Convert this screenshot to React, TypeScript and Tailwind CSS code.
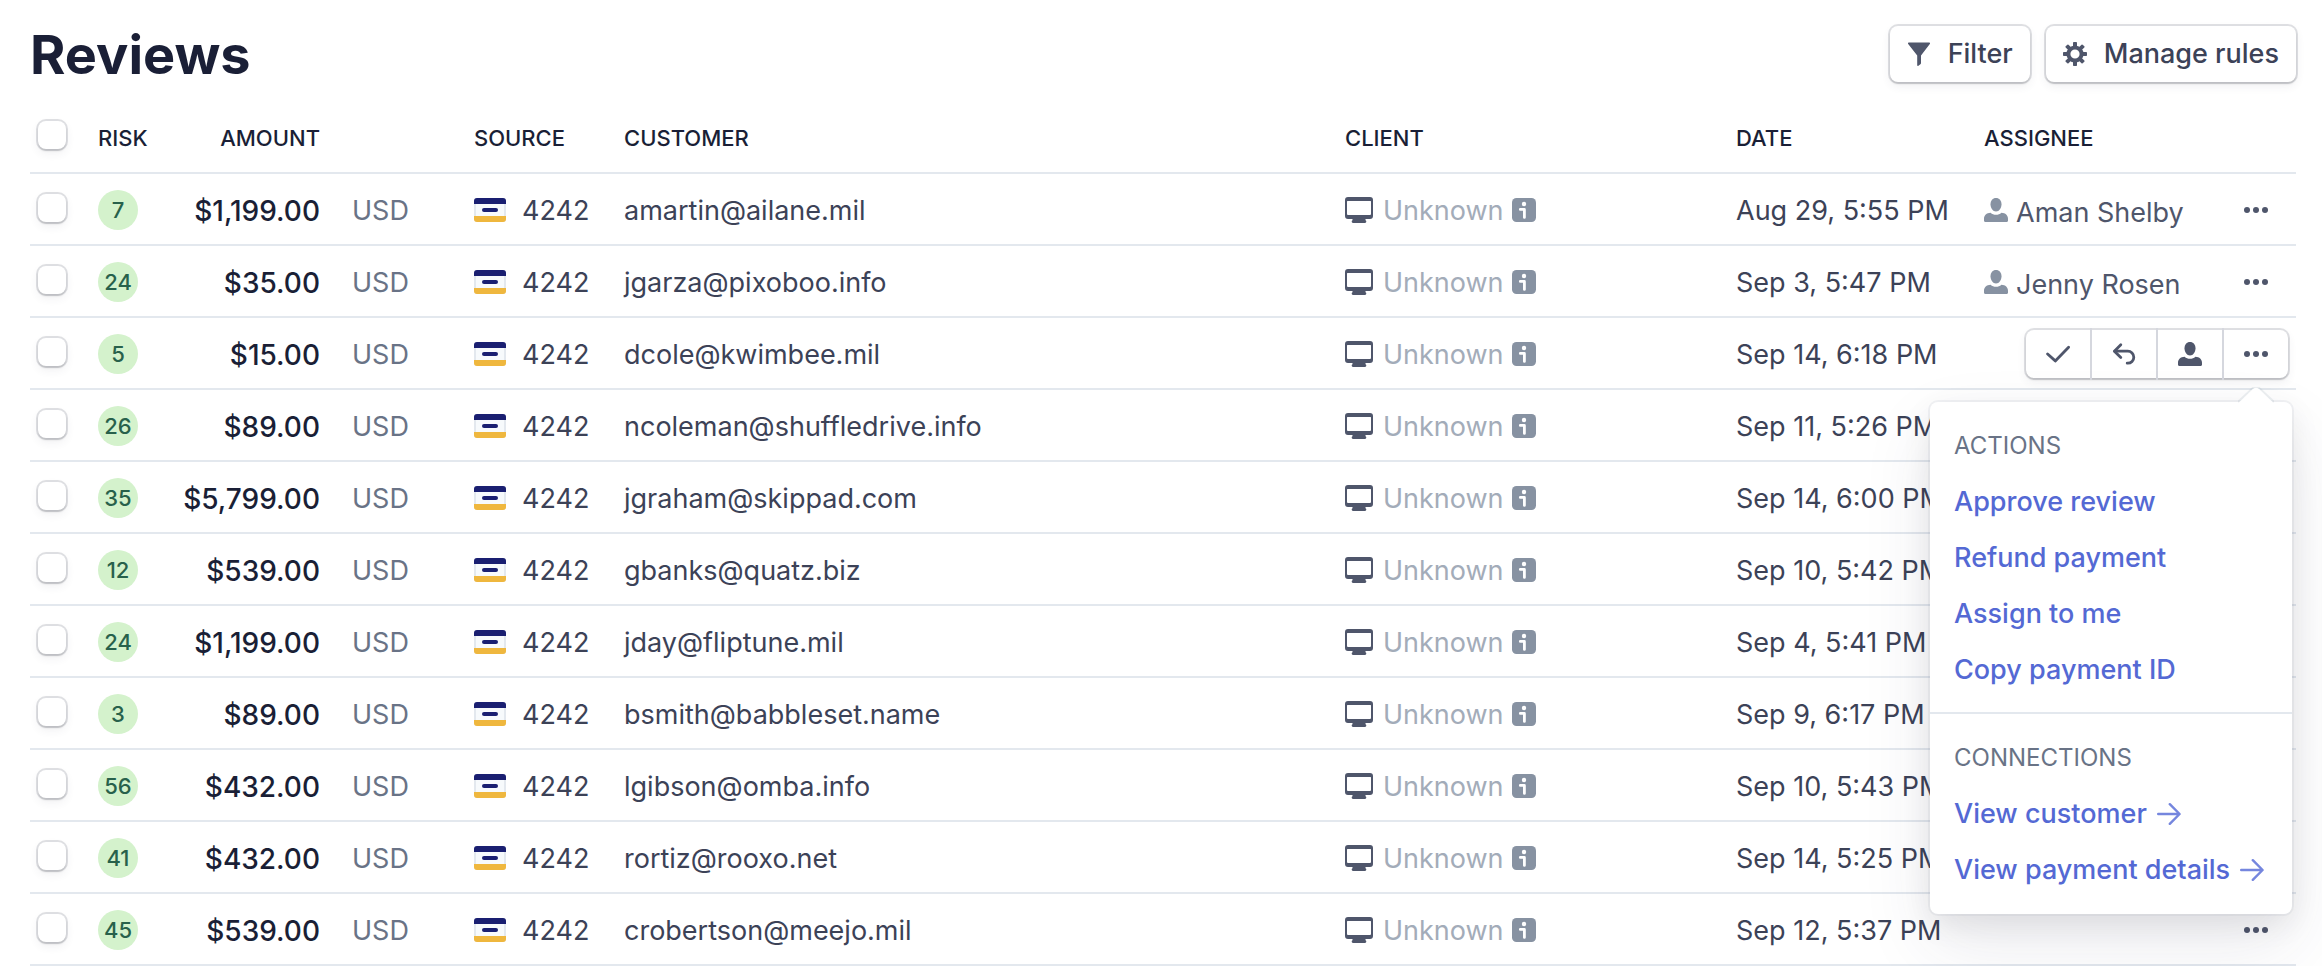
import React from "react";

type Review = {
  risk: number;
  amount: string;
  customer: string;
  date: string;
  assignee?: string;
  active?: boolean;
};

const reviews: Review[] = [
  { risk: 7, amount: "$1,199.00", customer: "amartin@ailane.mil", date: "Aug 29, 5:55 PM", assignee: "Aman Shelby" },
  { risk: 24, amount: "$35.00", customer: "jgarza@pixoboo.info", date: "Sep 3, 5:47 PM", assignee: "Jenny Rosen" },
  { risk: 5, amount: "$15.00", customer: "dcole@kwimbee.mil", date: "Sep 14, 6:18 PM", active: true },
  { risk: 26, amount: "$89.00", customer: "ncoleman@shuffledrive.info", date: "Sep 11, 5:26 PM" },
  { risk: 35, amount: "$5,799.00", customer: "jgraham@skippad.com", date: "Sep 14, 6:00 PM" },
  { risk: 12, amount: "$539.00", customer: "gbanks@quatz.biz", date: "Sep 10, 5:42 PM" },
  { risk: 24, amount: "$1,199.00", customer: "jday@fliptune.mil", date: "Sep 4, 5:41 PM" },
  { risk: 3, amount: "$89.00", customer: "bsmith@babbleset.name", date: "Sep 9, 6:17 PM" },
  { risk: 56, amount: "$432.00", customer: "lgibson@omba.info", date: "Sep 10, 5:43 PM" },
  { risk: 41, amount: "$432.00", customer: "rortiz@rooxo.net", date: "Sep 14, 5:25 PM" },
  { risk: 45, amount: "$539.00", customer: "crobertson@meejo.mil", date: "Sep 12, 5:37 PM" },
];

const icon = "block size-6 shrink-0";

function FilterIcon() {
  return (
    <svg viewBox="0 0 24 24" className={`${icon} text-[#4f566b]`} fill="currentColor" aria-hidden="true">
      <path d="M2 0.500h20c.900 0 1.300.900.800 1.600L14 13.400V21c0 .500-.200.900-.600 1.200l-2 1.600c-.600.400-1.200.100-1.200-.600v-9.800L1.200 2.100C.700 1.400 1.100.500 2 .500z" />
    </svg>
  );
}

function GearIcon() {
  return (
    <svg viewBox="0 0 24 24" className={`${icon} text-[#4f566b]`} aria-hidden="true">
      <g fill="currentColor">
        {[0, 45, 90, 135, 180, 225, 270, 315].map((angle) => (
          <rect key={angle} x="10" y="0" width="4" height="6" rx="0.800" transform={`rotate(${angle} 12 12)`} />
        ))}
      </g>
      <circle cx="12" cy="12" r="6.600" fill="none" stroke="currentColor" strokeWidth="4" />
    </svg>
  );
}

function PersonIcon() {
  return (
    <svg viewBox="0 0 24 24" className={icon} fill="currentColor" aria-hidden="true">
      <path d="M12 0c3.300 0 5.500 2.500 5.500 6.300 0 4-2.400 7.200-5.500 7.200S6.500 10.300 6.500 6.300C6.500 2.500 8.700 0 12 0z" />
      <path d="M6.600 14.700c1.500 1.400 3.300 2.100 5.400 2.100s3.900-.700 5.400-2.100c4.100.300 6.600 2.500 6.600 6v2.100c0 .700-.500 1.200-1.200 1.200H1.200C.5 24 0 23.500 0 22.800v-2.100c0-3.500 2.500-5.700 6.600-6z" />
    </svg>
  );
}

function DotsIcon() {
  return (
    <svg viewBox="0 0 24 24" className={icon} fill="currentColor" aria-hidden="true">
      <circle cx="3" cy="12" r="3" />
      <circle cx="12" cy="12" r="3" />
      <circle cx="21" cy="12" r="3" />
    </svg>
  );
}

function CheckIcon() {
  return (
    <svg viewBox="0 0 24 24" className={icon} fill="none" stroke="currentColor" strokeWidth="2.800" strokeLinecap="round" strokeLinejoin="round" aria-hidden="true">
      <path d="M1.600 12 9.300 18.900 22.600 5.200" />
    </svg>
  );
}

function UndoIcon() {
  return (
    <svg viewBox="0 0 24 24" className={icon} fill="none" stroke="currentColor" strokeWidth="2.800" strokeLinecap="round" strokeLinejoin="round" aria-hidden="true">
      <path d="M8.800 2.800 2.400 9.200l6.400 6.400" />
      <path d="M2.800 9.200h13a6 6 0 0 1 0 12h-.6" />
    </svg>
  );
}

function MonitorIcon() {
  return (
    <svg viewBox="0 0 28 26" className="block h-[26px] w-7 shrink-0" aria-hidden="true">
      <path fillRule="evenodd" fill="currentColor" d="M3 0h22a3 3 0 0 1 3 3v16a3 3 0 0 1-3 3h-4.500v1.200c.6.400.8.800.8 1.400 0 .8-.5 1.400-1.300 1.400H8c-.8 0-1.300-.6-1.300-1.400 0-.6.200-1 .8-1.400V22H3a3 3 0 0 1-3-3V3a3 3 0 0 1 3-3zM2 4.500V17a1 1 0 0 0 1 1h22a1 1 0 0 0 1-1V4.500a.5.500 0 0 0-.5-.5h-23a.5.500 0 0 0-.5.500z" />
    </svg>
  );
}

function InfoIcon() {
  return (
    <svg viewBox="0 0 24 24" className={`${icon} text-[#8792a2]`} aria-hidden="true">
      <rect width="24" height="24" rx="4.500" fill="currentColor" />
      <circle cx="12" cy="6" r="2.200" fill="#fff" />
      <path d="M8.300 11.400h4.100v8" fill="none" stroke="#fff" strokeWidth="2.800" strokeLinecap="round" strokeLinejoin="round" />
    </svg>
  );
}

function CardIcon() {
  return (
    <svg viewBox="0 0 32 24" className="block h-6 w-8 shrink-0" aria-hidden="true">
      <rect x="0" y="0" width="32" height="24" rx="3" fill="#e3e8ee" />
      <rect x="2" y="6" width="28" height="12" fill="#f7fafc" />
      <path d="M3 0h26a3 3 0 0 1 3 3v3H0V3a3 3 0 0 1 3-3z" fill="#1a1f71" />
      <path d="M0 18h32v3a3 3 0 0 1-3 3H3a3 3 0 0 1-3-3z" fill="#efb73e" />
      <rect x="8" y="10" width="16" height="4" rx="2" fill="#1a1f71" />
    </svg>
  );
}

function ArrowIcon() {
  return (
    <svg viewBox="0 0 24 24" className={`${icon} text-[#7586de]`} fill="none" stroke="currentColor" strokeWidth="2.400" strokeLinecap="round" strokeLinejoin="round" aria-hidden="true">
      <path d="M1.200 12h21M12.800 2.200 22.600 12l-9.800 9.800" />
    </svg>
  );
}

function Tick({ label }: { label: string }) {
  return (
    <input
      type="checkbox"
      aria-label={label}
      className="ml-2 block size-7 appearance-none rounded-lg bg-white shadow-[0_0_0_2px_rgba(60,66,87,0.16),0_2px_2px_rgba(0,0,0,0.12),0_4px_10px_rgba(60,66,87,0.08)] checked:bg-[#5469d4]"
    />
  );
}

function ToolbarButton({ children }: { children: React.ReactNode }) {
  return (
    <button
      type="button"
      className="flex h-14 items-center gap-[17px] rounded-lg bg-white px-[17px] text-[27px] font-medium text-[#3c4257] shadow-[0_0_0_2px_rgba(60,66,87,0.16),0_2px_2px_rgba(0,0,0,0.12),0_4px_10px_rgba(60,66,87,0.08)]"
    >
      {children}
    </button>
  );
}

function ActionsMenu() {
  const item = "flex h-14 items-center gap-2.5 px-6 text-[27px] font-medium whitespace-nowrap text-[#5469d4]";
  const heading = "flex h-14 items-center px-6 text-[24px] font-normal text-[#697386]";
  return (
    <div className="absolute top-full -right-1 z-10 mt-6 min-w-[362px] rounded-lg bg-white text-left shadow-[0_0_0_2px_rgba(136,152,170,0.1),0_30px_70px_rgba(49,49,93,0.1),0_10px_30px_rgba(0,0,0,0.08)]">
      <svg viewBox="0 0 36 16" className="absolute -top-[15px] right-[18px] h-4 w-9" aria-hidden="true">
        <path d="M0 16 14 2.600c2.500-2.400 5.500-2.400 8 0L36 16z" fill="#fff" />
        <path d="M0 15 14 1.600c2.500-2.400 5.500-2.400 8 0L36 15" fill="none" stroke="#8898aa" strokeOpacity="0.150" strokeWidth="2" />
      </svg>
      <section className="border-b-2 border-[#e3e8ee] pt-4 pb-3.5">
        <h2 className={heading}>ACTIONS</h2>
        <button type="button" className={item}>Approve review</button>
        <button type="button" className={item}>Refund payment</button>
        <button type="button" className={item}>Assign to me</button>
        <button type="button" className={item}>Copy payment ID</button>
      </section>
      <section className="py-4">
        <h2 className={heading}>CONNECTIONS</h2>
        <a href="#customer" className={item}>View customer <ArrowIcon /></a>
        <a href="#payment" className={item}>View payment details <ArrowIcon /></a>
      </section>
    </div>
  );
}

function RowActions() {
  const cell = "flex h-12 w-16 items-center justify-center";
  const divider = "-my-0.5 w-0.5 bg-[#d5d7de]";
  return (
    <div className="relative ml-auto flex w-fit rounded-lg bg-white text-[#4f566b] shadow-[0_0_0_2px_rgba(60,66,87,0.16),0_2px_2px_rgba(0,0,0,0.12),0_4px_10px_rgba(60,66,87,0.08)]">
      <button type="button" aria-label="Approve" className={cell}><CheckIcon /></button>
      <span className={divider} />
      <button type="button" aria-label="Refund" className={cell}><UndoIcon /></button>
      <span className={divider} />
      <button type="button" aria-label="Assign" className={cell}><PersonIcon /></button>
      <span className={divider} />
      <button type="button" aria-label="More actions" className={cell}><DotsIcon /></button>
      <ActionsMenu />
    </div>
  );
}

export default function App() {
  const th = "h-[73px] p-0 pt-1 text-left align-middle text-[22px] font-medium text-[#1a1f36]";
  const iconCell = "h-[72px] p-0 pt-0.5 align-middle whitespace-nowrap";
  const textCell = "h-[72px] p-0 pt-1 align-middle whitespace-nowrap";
  return (
    <main className="bg-white pr-[26px] pl-[30px] font-['Inter',sans-serif] text-[27px] leading-9 text-[#3c4257]">
      <header className="flex h-[100px] items-center justify-between pt-2">
        <h1 className="pt-0.5 text-[54px] leading-none font-bold text-[#1a1f36]">Reviews</h1>
        <div className="flex gap-4">
          <ToolbarButton><FilterIcon />Filter</ToolbarButton>
          <ToolbarButton><GearIcon />Manage rules</ToolbarButton>
        </div>
      </header>
      <table className="w-full table-fixed border-collapse">
        <colgroup>
          <col className="w-[68px]" />
          <col className="w-[68px]" />
          <col className="w-[154px]" />
          <col className="w-[154px]" />
          <col className="w-[150px]" />
          <col />
          <col className="w-[391px]" />
          <col className="w-[248px]" />
          <col className="w-[232px]" />
          <col className="w-20" />
        </colgroup>
        <thead>
          <tr className="border-b-2 border-[#e3e8ee]">
            <th className="h-[73px] p-0 pb-0.5 align-middle"><Tick label="Select all reviews" /></th>
            <th className={th}>RISK</th>
            <th className={th}><div className="text-right">AMOUNT</div></th>
            <th className={th} />
            <th className={th}>SOURCE</th>
            <th className={th}>CUSTOMER</th>
            <th className={th}>CLIENT</th>
            <th className={th}>DATE</th>
            <th className={th}>ASSIGNEE</th>
            <th className={th} />
          </tr>
        </thead>
        <tbody>
          {reviews.map((r) => (
            <tr key={r.customer} className="border-b-2 border-[#e3e8ee]">
              <td className="h-[72px] p-0 pb-0.5 align-middle"><Tick label={`Select ${r.customer}`} /></td>
              <td className={iconCell}>
                <span className="flex size-10 items-center justify-center rounded-full bg-[#d4f2cc] text-[22px] font-medium text-[#28614b]">{r.risk}</span>
              </td>
              <td className={`${textCell} text-right text-[28px] font-medium text-[#1a1f36]`}>{r.amount}</td>
              <td className={`${textCell} pl-8 text-[#697386]`}>USD</td>
              <td className={iconCell}>
                <span className="flex items-center gap-4">
                  <CardIcon />
                  <span className="pt-0.5">4242</span>
                </span>
              </td>
              <td className={textCell}>{r.customer}</td>
              <td className={iconCell}>
                <span className="flex items-center gap-2.5 text-[#4f566b]">
                  <MonitorIcon />
                  <span className="flex items-center gap-2 text-[#a3acb9]">
                    <span className="pt-0.5">Unknown</span>
                    <InfoIcon />
                  </span>
                </span>
              </td>
              <td className={textCell}>{r.date}</td>
              {r.active ? (
                <td className={`${iconCell} pr-2`} colSpan={2}><RowActions /></td>
              ) : (
                <>
                  <td className={iconCell}>
                    {r.assignee && (
                      <span className="flex items-center gap-2 text-[#4f566b]">
                        <span className="text-[#8792a2]"><PersonIcon /></span>
                        <span className="pt-1.5">{r.assignee}</span>
                      </span>
                    )}
                  </td>
                  <td className={`${iconCell} pr-2`}>
                    <button type="button" aria-label={`More actions for ${r.customer}`} className="ml-auto flex h-12 w-16 items-center justify-center text-[#4f566b]"><DotsIcon /></button>
                  </td>
                </>
              )}
            </tr>
          ))}
        </tbody>
      </table>
    </main>
  );
}
